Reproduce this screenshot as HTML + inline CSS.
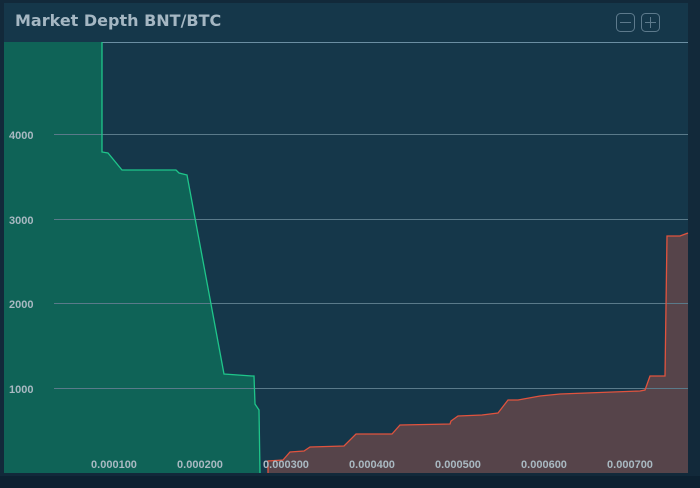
<!DOCTYPE html>
<html><head><style>
html,body{margin:0;padding:0;width:700px;height:488px;overflow:hidden;background:#12293a;font-family:"Liberation Sans",sans-serif}
</style></head><body>
<div style="position:absolute;left:0;top:476px;width:700px;height:12px;background:#0d2131"></div>
<div style="position:absolute;left:4px;top:3px;width:684px;height:470px;background:#15374a"></div>
<div style="position:absolute;left:15px;top:11px;font-size:16px;font-weight:bold;color:#a5b7c3;font-family:'DejaVu Sans',sans-serif">Market Depth BNT/BTC</div>
<svg width="700" height="488" style="position:absolute;left:0;top:0">
<rect x="616.5" y="13.5" width="18" height="18" rx="4" fill="none" stroke="#5d7a8c"/>
<line x1="620" y1="22.5" x2="631" y2="22.5" stroke="#5d7a8c"/>
<rect x="641.5" y="13.5" width="18" height="18" rx="4" fill="none" stroke="#5d7a8c"/>
<line x1="645" y1="22.5" x2="656" y2="22.5" stroke="#5d7a8c"/>
<line x1="650.5" y1="17" x2="650.5" y2="28" stroke="#5d7a8c"/>
<line x1="4" y1="42.5" x2="688" y2="42.5" stroke="#6b8ea2"/>
<path d="M4,42 L102,42 L102,152 L108,153 L122,170 L176,170 L179,173 L187,175 L224,374 L252,376 L254,376 L255,404 L259,410 L260,473 L4,473Z" fill="#0f6357"/>
<path d="M268,473 L268,461 L283,460 L290,452 L304,451 L310,447 L344,446 L356,434 L392,434 L400,425 L450,424 L451,421 L458,416 L482,415 L498,413 L508,400 L518,400 L540,396 L560,394 L640,391 L645,390 L650,376 L665,376 L667,236 L680,236 L688,233 L688,473Z" fill="#56444a"/>
<g stroke="#5a7a8a" stroke-width="1">
<line x1="54" y1="134.5" x2="688" y2="134.5"/>
<line x1="54" y1="219.5" x2="688" y2="219.5"/>
<line x1="54" y1="303.5" x2="688" y2="303.5"/>
<line x1="54" y1="388.5" x2="688" y2="388.5"/>
</g>
<path d="M102,42 L102,152 L108,153 L122,170 L176,170 L179,173 L187,175 L224,374 L252,376 L254,376 L255,404 L259,410 L260,473" fill="none" stroke="#1fc58a" stroke-width="1.3"/>
<path d="M268,473 L268,461 L283,460 L290,452 L304,451 L310,447 L344,446 L356,434 L392,434 L400,425 L450,424 L451,421 L458,416 L482,415 L498,413 L508,400 L518,400 L540,396 L560,394 L640,391 L645,390 L650,376 L665,376 L667,236 L680,236 L688,233" fill="none" stroke="#e0533e" stroke-width="1.3"/>
<g font-size="11" font-weight="bold" fill="#a9b9c2" font-family="Liberation Sans,sans-serif">
<text x="9" y="139">4000</text>
<text x="9" y="224">3000</text>
<text x="9" y="308">2000</text>
<text x="9" y="393">1000</text>
<g text-anchor="middle">
<text x="114" y="468">0.000100</text>
<text x="200" y="468">0.000200</text>
<text x="286" y="468">0.000300</text>
<text x="372" y="468">0.000400</text>
<text x="458" y="468">0.000500</text>
<text x="544" y="468">0.000600</text>
<text x="630" y="468">0.000700</text>
</g></g>
</svg>
</body></html>
